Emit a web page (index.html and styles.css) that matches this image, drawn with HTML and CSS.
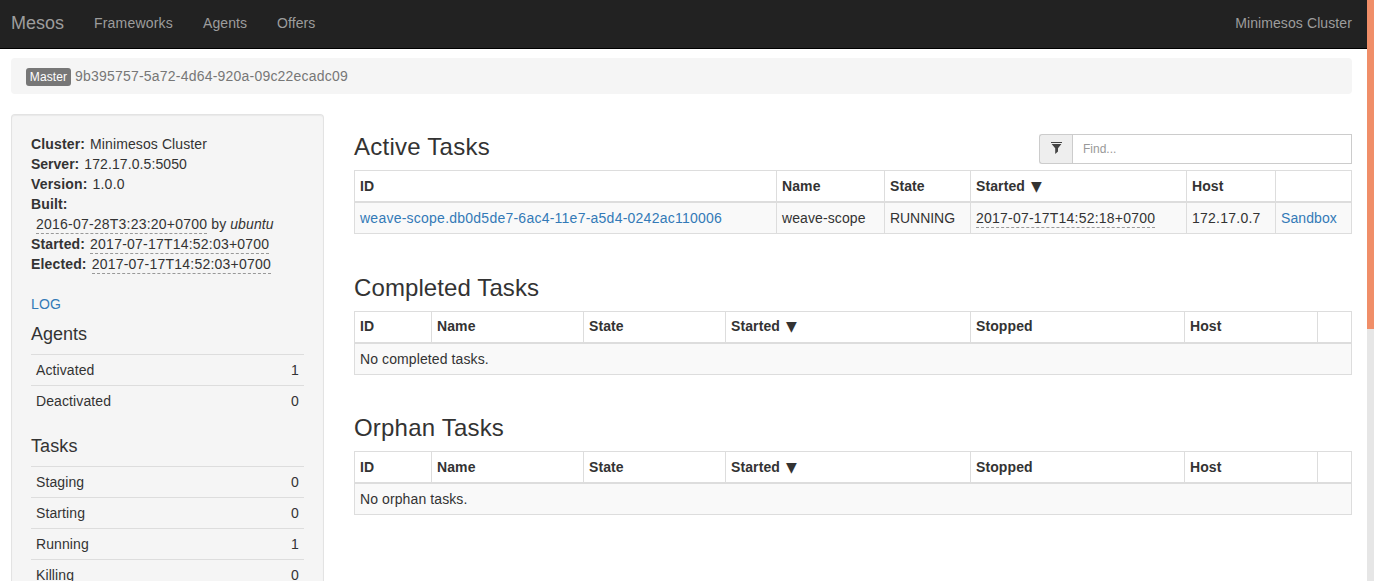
FILE: index.html
```html
<!DOCTYPE html>
<html lang="en">
<head>
<meta charset="utf-8">
<title>Mesos</title>
<link rel="stylesheet" href="styles.css">
</head>
<body>
<div class="page">
<nav class="navbar">
  <a class="brand">Mesos</a>
  <a class="nav-link frameworks">Frameworks</a>
  <a class="nav-link agents">Agents</a>
  <a class="nav-link offers">Offers</a>
  <span class="cluster-name">Minimesos Cluster</span>
</nav>
<div class="content">
  <div class="breadcrumb"><span class="label">Master</span><span class="master-id">9b395757-5a72-4d64-920a-09c22ecadc09</span></div>
  <div class="columns">
    <aside class="well">
      <div class="info"><b>Cluster:</b><span class="value">Minimesos Cluster</span></div>
      <div class="info"><b class="tight">Server:</b><span class="value">172.17.0.5:5050</span></div>
      <div class="info"><b>Version:</b><span class="value num">1.0.0</span></div>
      <div class="info"><b>Built:</b></div>
      <div class="info"><span class="value"><span class="time">2016-07-28T3:23:20+0700</span> by <i>ubuntu</i></span></div>
      <div class="info"><b>Started:</b><span class="value time">2017-07-17T14:52:03+0700</span></div>
      <div class="info"><b>Elected:</b><span class="value time">2017-07-17T14:52:03+0700</span></div>
      <a class="link log">LOG</a>
      <h4 class="tight">Agents</h4>
      <div class="stats">
        <div class="stat"><span>Activated</span><span>1</span></div>
        <div class="stat"><span>Deactivated</span><span>0</span></div>
      </div>
      <h4>Tasks</h4>
      <div class="stats">
        <div class="stat"><span>Staging</span><span>0</span></div>
        <div class="stat"><span>Starting</span><span>0</span></div>
        <div class="stat"><span>Running</span><span>1</span></div>
        <div class="stat"><span>Killing</span><span>0</span></div>
      </div>
    </aside>
    <main class="main">
      <section>
        <div class="section-head">
          <h3 class="active-title">Active Tasks</h3>
          <div class="filter">
            <span class="filter-icon"><svg width="11" height="12" viewBox="0 0 11 12"><path d="M0 0h11v1H0zM.6 2h9.8L7 6.2v3.3L4.2 12V6.2z" fill="#444"/></svg></span>
            <input class="filter-input" type="text" placeholder="Find...">
          </div>
        </div>
        <table class="tasks">
          <colgroup><col class="a-id"><col class="a-name"><col class="a-state"><col class="a-started"><col class="a-host"><col class="a-box"></colgroup>
          <thead><tr><th>ID</th><th>Name</th><th>State</th><th>Started <span class="sort">▼</span></th><th>Host</th><th></th></tr></thead>
          <tbody><tr><td><a class="link num">weave-scope.db0d5de7-6ac4-11e7-a5d4-0242ac110006</a></td><td>weave-scope</td><td class="state">RUNNING</td><td><span class="time">2017-07-17T14:52:18+0700</span></td><td class="num">172.17.0.7</td><td><a class="link">Sandbox</a></td></tr></tbody>
        </table>
      </section>
      <section class="completed">
        <h3>Completed Tasks</h3>
        <table class="tasks">
          <colgroup><col class="c-id"><col class="c-name"><col class="c-state"><col class="c-started"><col class="c-stopped"><col class="c-host"><col class="c-box"></colgroup>
          <thead><tr><th>ID</th><th>Name</th><th>State</th><th>Started <span class="sort">▼</span></th><th>Stopped</th><th>Host</th><th></th></tr></thead>
          <tbody><tr><td colspan="7">No completed tasks.</td></tr></tbody>
        </table>
      </section>
      <section>
        <h3 class="orphan-title">Orphan Tasks</h3>
        <table class="tasks">
          <colgroup><col class="c-id"><col class="c-name"><col class="c-state"><col class="c-started"><col class="c-stopped"><col class="c-host"><col class="c-box"></colgroup>
          <thead><tr><th>ID</th><th>Name</th><th>State</th><th>Started <span class="sort">▼</span></th><th>Stopped</th><th>Host</th><th></th></tr></thead>
          <tbody><tr><td colspan="7">No orphan tasks.</td></tr></tbody>
        </table>
      </section>
    </main>
  </div>
</div>
</div>
<div class="scrollbar"><div class="thumb"></div></div>
</body>
</html>
```
FILE: styles.css
```css
* { box-sizing: border-box; }
body {
  margin: 0;
  display: flex;
  height: 581px;
  overflow: hidden;
  background: #fff;
  color: #333;
  font: 14px/20px "Liberation Sans", Arial, sans-serif;
  letter-spacing: .1px;
}
.page { flex: 1; min-width: 0; }
.scrollbar { width: 7px; background: #e6e6e6; }
.thumb { height: 329px; background: #f08e68; }

.navbar {
  display: flex;
  align-items: center;
  height: 49px;
  padding: 0 15px 3px 11px;
  background: #222;
  border-bottom: 1px solid #000;
  color: #9d9d9d;
}
.brand { width: 83px; font-size: 18px; letter-spacing: 0; }
.frameworks { width: 109px; letter-spacing: .2px; }
.agents { width: 74px; }
.cluster-name { margin-left: auto; }

.content { padding: 9px 15px 0 11px; }
.breadcrumb {
  display: flex;
  align-items: center;
  height: 36px;
  padding: 0 15px;
  border-radius: 4px;
  background: #f5f5f5;
  color: #777;
}
.label {
  width: 45px;
  height: 18px;
  margin: 2px 4px 0 0;
  border-radius: 3px;
  background: #777;
  color: #fff;
  font-size: 12px;
  line-height: 18px;
  text-align: center;
}
.master-id { letter-spacing: .21px; }

.columns { display: flex; gap: 30px; margin-top: 20px; }
.well {
  width: 313px;
  height: 467px;
  padding: 19px 19px 0;
  border: 1px solid #e3e3e3;
  border-bottom: 0;
  border-radius: 4px 4px 0 0;
  background: #f5f5f5;
  box-shadow: inset 0 1px 1px rgba(0, 0, 0, .05);
}
.info { height: 20px; white-space: nowrap; }
.info b { letter-spacing: .15px; }
.value { margin-left: 5px; }
.num { letter-spacing: .24px; }
.time { border-bottom: 1px dashed #999; padding-bottom: 1px; letter-spacing: .22px; }
.link { color: #337ab7; }
.log { display: block; margin-top: 20px; }
h3, h4 { margin: 0; font-weight: 400; line-height: 1.1; }
h4 { margin: 10px 0; font-size: 18px; line-height: 20px; }
.tight, .info .tight { letter-spacing: 0; }
.stats { margin-bottom: 20px; }
.stat {
  display: flex;
  justify-content: space-between;
  padding: 5px;
  border-top: 1px solid #ddd;
}

.main { flex: 1; min-width: 0; padding-top: 20px; }
h3 { margin-bottom: 10px; font-size: 24px; }
.active-title { letter-spacing: .25px; }
.orphan-title { letter-spacing: .2px; }
.section-head { display: flex; justify-content: space-between; height: 36px; }
section { margin-bottom: 40px; }
.completed { margin-top: 41px; }
.completed h3 { height: 26px; line-height: 26px; }
.filter { display: flex; width: 313px; height: 30px; }
.filter-icon {
  display: flex;
  align-items: center;
  justify-content: center;
  width: 33px;
  border: 1px solid #ccc;
  border-right: 0;
  border-radius: 3px 0 0 3px;
  background: #eee;
}
.filter-icon svg { margin: -2px 0 0 1px; }
.filter-input {
  flex: 1;
  min-width: 0;
  padding: 5px 10px;
  border: 1px solid #ccc;
  border-radius: 0;
  font: 12px/18px "Liberation Sans", Arial, sans-serif;
  color: #555;
}
.filter-input::placeholder { color: #999; }

.tasks {
  width: 998px;
  table-layout: fixed;
  border-collapse: collapse;
  border: 1px solid #ddd;
}
.tasks th, .tasks td {
  padding: 5px;
  border: 1px solid #ddd;
  text-align: left;
  white-space: nowrap;
}
.tasks th { border-bottom-width: 2px; }
.completed .tasks th { padding-top: 4px; padding-bottom: 6px; }
.tasks tbody tr { background: #f9f9f9; }
.tasks .state { letter-spacing: -.05px; }
.sort { margin-left: 2px; font: 14px/1 "DejaVu Sans", sans-serif; letter-spacing: 0; }
.a-id { width: 422px; }
.a-name { width: 108px; }
.a-state { width: 86px; }
.a-started { width: 216px; }
.a-host { width: 89px; }
.a-box { width: 76px; }
.c-id { width: 77px; }
.c-name { width: 152px; }
.c-state { width: 142px; }
.c-started { width: 245px; }
.c-stopped { width: 214px; }
.c-host { width: 133px; }
.c-box { width: 34px; }
```
